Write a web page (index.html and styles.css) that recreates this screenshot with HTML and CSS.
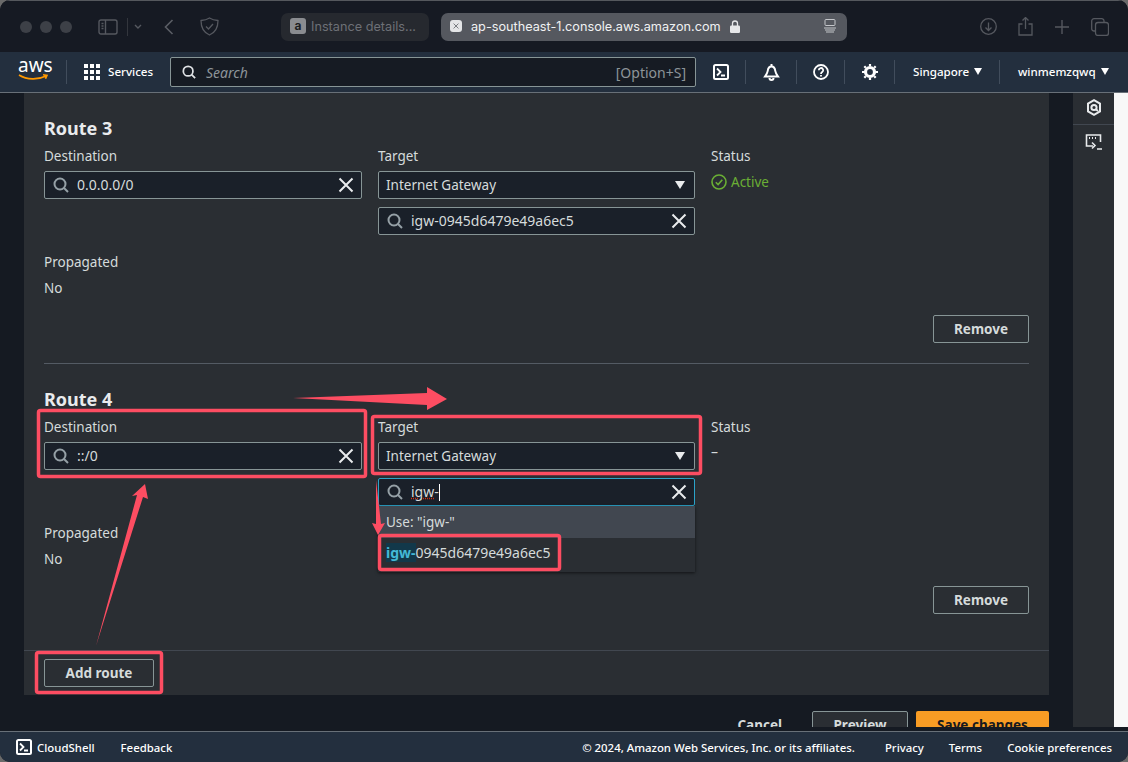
FILE: index.html
```html
<!DOCTYPE html>
<html lang="en">
<head>
    <meta charset="UTF-8">
    <meta name="viewport" content="width=device-width, initial-scale=1">
    <title>Edit routes</title>
    <link rel="stylesheet" href="styles.css">
</head>
<body>

<svg class="defs" width="0" height="0">
    <symbol id="i-search" viewBox="0 0 16 16"><circle cx="7" cy="7" r="5.5" fill="none" stroke="currentColor" stroke-width="2"/><path d="M11 11l4 4" fill="none" stroke="currentColor" stroke-width="2"/></symbol>
    <symbol id="i-close" viewBox="0 0 16 16"><path d="M1.500 1.500l13 13M14.500 1.500l-13 13" fill="none" stroke="currentColor" stroke-width="2"/></symbol>
    <symbol id="i-shell" viewBox="0 0 16 16"><rect x="1" y="1" width="14" height="14" rx="1.5" fill="none" stroke="currentColor" stroke-width="2"/><path d="M4 4.5L7.5 8 4 11.5M8 11.5h4" fill="none" stroke="currentColor" stroke-width="1.8"/></symbol>
</svg>

<div class="window">

    <!-- browser bar -->
    <div class="chrome">
        <span class="dot"></span><span class="dot"></span><span class="dot"></span>
        <svg class="c-sidebar" width="20" height="16" viewBox="0 0 20 16" fill="none" stroke="#55585f" stroke-width="1.4"><rect x="1" y="1" width="18" height="14" rx="2"/><path d="M7.5 1v14M3.5 4.5h2M3.5 7h2M3.5 9.5h2"/></svg>
        <span class="c-sep"></span>
        <svg class="c-down" width="8" height="6" viewBox="0 0 8 6" fill="none" stroke="#55585f" stroke-width="1.4"><path d="M1 1l3 3 3-3"/></svg>
        <svg class="c-back" width="10" height="16" viewBox="0 0 10 16" fill="none" stroke="#5b5e65" stroke-width="1.6"><path d="M8.5 1L1.5 8l7 7"/></svg>
        <svg class="c-shield" width="19" height="19" viewBox="0 0 19 19" fill="none" stroke="#55585f" stroke-width="1.3"><path d="M9.500 1c2.500 1.600 5 2.300 8.500 2.500 0 7-2.500 12-8.500 14.500C3.500 15.500 1 10.500 1 3.500 4.500 3.300 7 2.600 9.500 1z"/><path d="M6 9.500l2.500 2.500 4.500-5"/></svg>
        <div class="tab tab-off">
            <span class="fav fav-a">a</span>
            <span>Instance details...</span>
        </div>
        <div class="tab tab-on">
            <span class="fav fav-x">
                <svg width="6" height="6"><use href="#i-close"/></svg>
            </span>
            <span>ap-southeast-1.console.aws.amazon.com</span>
            <svg class="lock" width="10" height="13" viewBox="0 0 10 13"><path d="M2.500 6V3.500a2.500 2.500 0 0 1 5 0V6" fill="none" stroke="#e6e7e9" stroke-width="1.300"/><rect y="5.500" width="10" height="7.500" rx="1.200" fill="#e6e7e9"/></svg>
            <svg class="reader" width="12" height="14" viewBox="0 0 12 14" fill="none" stroke="#c4c6ca" stroke-width="1"><rect x="1" y=".5" width="10" height="6" rx="1"/><path d="M0 9h12M1 11h10M2 13h8"/></svg>
        </div>
        <svg class="c-dl" width="17" height="17" viewBox="0 0 17 17" fill="none" stroke="#55585f" stroke-width="1.300"><circle cx="8.500" cy="8.500" r="7.800"/><path d="M8.500 4.500v8M5.500 9.500l3 3 3-3"/></svg>
        <svg class="c-share" width="15" height="19" viewBox="0 0 15 19" fill="none" stroke="#55585f" stroke-width="1.300"><path d="M4.500 7H1v11h13V7h-3.500M7.500 12V1M4.500 3.500l3-3 3 3"/></svg>
        <svg class="c-plus" width="14" height="14" viewBox="0 0 14 14" fill="none" stroke="#55585f" stroke-width="1.400"><path d="M7 0v14M0 7h14"/></svg>
        <svg class="c-tabs" width="18" height="18" viewBox="0 0 18 18" fill="none" stroke="#55585f" stroke-width="1.300"><rect x="4.500" y="4.500" width="13" height="13" rx="2.500"/><path d="M4 13H3a2.300 2.300 0 0 1-2.300-2.300V3A2.300 2.300 0 0 1 3 .7h7.500A2.300 2.300 0 0 1 13 3v1"/></svg>
    </div>

    <!-- console nav -->
    <nav class="topnav">
        <div class="aws-logo">
            <span>aws</span>
            <svg width="31" height="7" viewBox="0 0 31 7" fill="none" stroke="#ff9900" stroke-width="1.600"><path d="M1 1c8 5 19 5 27 1M25 .8l4 .5-1.500 3.500"/></svg>
        </div>
        <span class="nav-sep"></span>
        <span class="grid-icon">
            <i></i><i></i><i></i><i></i><i></i><i></i><i></i><i></i><i></i>
        </span>
        <span class="nav-label services">Services</span>
        <div class="nav-search">
            <svg width="14" height="14"><use href="#i-search"/></svg>
            <span class="ph">Search</span>
            <span class="hint">[Option+S]</span>
        </div>
        <span class="nav-btn w50"><svg width="16" height="16"><use href="#i-shell"/></svg></span>
        <span class="nav-btn w51">
            <svg width="17" height="17" viewBox="0 0 17 17" fill="none" stroke="#fff" stroke-width="2"><path d="M8.500 2.500c2.500 0 3.500 2 3.800 4.500.2 1.800 1 3 2.700 5.500H2c1.700-2.500 2.500-3.700 2.700-5.500.3-2.500 1.300-4.500 3.800-4.500z"/><path d="M8.500 0v2"/><path d="M6.500 14a2 2 0 0 0 4 0"/></svg>
        </span>
        <span class="nav-btn w48">
            <svg width="16" height="16" viewBox="0 0 16 16" fill="none" stroke="#fff" stroke-width="1.800"><circle cx="8" cy="8" r="7"/><path d="M5.800 6.200a2.200 2.200 0 1 1 3.300 1.900C8.300 8.600 8 9 8 10M8 11v1.500"/></svg>
        </span>
        <span class="nav-btn w50">
            <svg width="16" height="16" viewBox="0 0 16 16" fill="none" stroke="#fff" stroke-width="2.200"><circle cx="8" cy="8" r="4.500" stroke-width="3.200"/><path d="M8 0v2M8 14v2M0 8h2M14 8h2M2.300 2.300l1.500 1.500M12.200 12.200l1.500 1.500M13.700 2.300l-1.500 1.500M3.800 12.200l-1.500 1.500"/></svg>
        </span>
        <span class="nav-menu region">Singapore <i class="tri"></i></span>
        <span class="nav-menu">winmemzqwq <i class="tri"></i></span>
    </nav>

    <div class="page">
        <div class="content">
            <div class="panel">

                <section class="route">
                    <h2>Route 3</h2>
                    <div class="route-grid">
                        <div>
                            <label>Destination</label>
                            <div class="field">
                                <svg class="f-search" width="16" height="16"><use href="#i-search"/></svg>
                                <span class="f-text">0.0.0.0/0</span>
                                <svg class="f-close" width="16" height="16"><use href="#i-close"/></svg>
                            </div>
                        </div>
                        <div>
                            <label>Target</label>
                            <div class="field select">
                                <span class="f-text">Internet Gateway</span>
                                <i class="select-tri"></i>
                            </div>
                            <div class="field second">
                                <svg class="f-search" width="16" height="16"><use href="#i-search"/></svg>
                                <span class="f-text">igw-0945d6479e49a6ec5</span>
                                <svg class="f-close" width="16" height="16"><use href="#i-close"/></svg>
                            </div>
                        </div>
                        <div>
                            <label>Status</label>
                            <div class="status-ok">
                                <svg width="16" height="16" viewBox="0 0 16 16" fill="none" stroke="#6aaf35" stroke-width="1.600"><circle cx="8" cy="8" r="7"/><path d="M4.800 8.200l2.300 2.300 4.200-4.800"/></svg>
                                Active
                            </div>
                        </div>
                    </div>
                    <div class="propagated">
                        <label>Propagated</label>
                        <p>No</p>
                    </div>
                    <div class="route-actions"><button class="btn">Remove</button></div>
                </section>

                <hr class="route-line">

                <section class="route">
                    <h2>Route 4</h2>
                    <div class="route-grid">
                        <div>
                            <label>Destination</label>
                            <div class="field">
                                <svg class="f-search" width="16" height="16"><use href="#i-search"/></svg>
                                <span class="f-text">::/0</span>
                                <svg class="f-close" width="16" height="16"><use href="#i-close"/></svg>
                            </div>
                        </div>
                        <div>
                            <label>Target</label>
                            <div class="field select">
                                <span class="f-text">Internet Gateway</span>
                                <i class="select-tri"></i>
                            </div>
                            <div class="combo">
                                <div class="field second focused">
                                    <svg class="f-search" width="16" height="16"><use href="#i-search"/></svg>
                                    <span class="f-text"><span class="typo">igw</span>-<span class="caret"></span></span>
                                    <svg class="f-close" width="16" height="16"><use href="#i-close"/></svg>
                                </div>
                                <div class="dropdown">
                                    <div class="opt opt-use">Use: "igw-"</div>
                                    <div class="opt"><mark>igw-</mark>0945d6479e49a6ec5</div>
                                </div>
                            </div>
                        </div>
                        <div>
                            <label>Status</label>
                            <div class="status-none">–</div>
                        </div>
                    </div>
                    <div class="propagated">
                        <label>Propagated</label>
                        <p>No</p>
                    </div>
                    <div class="route-actions"><button class="btn">Remove</button></div>
                </section>

                <div class="panel-foot"><button class="btn">Add route</button></div>
            </div>

            <div class="form-actions">
                <span class="cancel">Cancel</span>
                <button class="btn preview">Preview</button>
                <button class="btn save">Save changes</button>
            </div>
        </div>

        <aside class="rail">
            <div class="rail-item">
                <svg width="16" height="17" viewBox="0 0 16 17" fill="none" stroke="#e8eaec" stroke-width="2"><path d="M8 1.200l6 3.400v7.800l-6 3.400-6-3.400V4.600z"/><circle cx="8" cy="8.500" r="2.600"/><path d="M9.500 10l2.500 2"/></svg>
            </div>
            <div class="rail-item">
                <svg width="18" height="17" viewBox="0 0 18 17" fill="none" stroke="#e8eaec" stroke-width="1.600"><path d="M8 12H1.500V1h14v7"/><path d="M4 4h1M7 4h1M10 4h1" stroke-width="2"/><path d="M7 8.500l3 3-3 3M12 15h5"/></svg>
            </div>
        </aside>
        <div class="scroll-strip"></div>
    </div>

    <footer class="bottombar">
        <svg class="foot-shell" width="16" height="16"><use href="#i-shell"/></svg>
        <span class="foot-shell-text">CloudShell</span>
        <span class="foot-feedback">Feedback</span>
        <span class="foot-copy">© 2024, Amazon Web Services, Inc. or its affiliates.</span>
        <span class="foot-link privacy">Privacy</span>
        <span class="foot-link terms">Terms</span>
        <span class="foot-link cookie">Cookie preferences</span>
    </footer>
</div>

<!-- red annotations drawn on top of the screenshot -->
<svg class="marks" width="1128" height="762" viewBox="0 0 1128 762">
    <g fill="none" stroke="#fd4d62" stroke-width="3.500">
        <rect x="38.500" y="410.500" width="327" height="66" rx="2"/>
        <rect x="372.500" y="416.500" width="328" height="57" rx="2"/>
        <rect x="379.500" y="535.500" width="180" height="34" rx="2"/>
        <rect x="36.500" y="652.500" width="125" height="40" rx="2"/>
    </g>
    <g fill="#fd4d62">
        <polygon points="293,398 427,393 427,387 447,399 427,410 427,405"/>
        <polygon points="96,646 137,495 132,496 145,484 148,499 143,497"/>
        <polygon points="376,480 381,524 385,523 378,535 372,523 376,524"/>
    </g>
</svg>

</body>
</html>
```

FILE: styles.css
```css
* {
    box-sizing: border-box;
}
html {
    background: #6a6a6a;
}
body {
    margin: 0;
    width: 1128px;
    height: 762px;
    overflow: hidden;
    position: relative;
    font-family: "Noto Sans", "Open Sans", sans-serif;
    font-size: 14px;
    color: #d5dbdb;
}
.defs {
    position: absolute;
}
.window {
    height: 762px;
    display: flex;
    flex-direction: column;
    background: #151a22;
    border-radius: 10px;
    overflow: hidden;
}

/* browser bar */
.chrome {
    height: 52px;
    flex: none;
    display: flex;
    align-items: center;
    padding-left: 20px;
    background: #161a23;
    border-top: 1px solid #55585d;
}
.dot {
    width: 12px;
    height: 12px;
    border-radius: 50%;
    background: #3d4047;
    margin-right: 8px;
}
.c-sidebar {
    margin-left: 18px;
}
.c-sep {
    width: 1px;
    height: 18px;
    background: #33363d;
    margin-left: 9px;
}
.c-down {
    margin-left: 6px;
}
.c-back {
    margin-left: 22px;
}
.c-shield {
    margin-left: 26px;
}
.tab {
    height: 28px;
    border-radius: 7px;
    display: flex;
    align-items: center;
    padding-bottom: 1px;
    font-family: Inter, Roboto, sans-serif;
    font-size: 12.7px;
}
.tab-off {
    width: 148px;
    margin-left: 62px;
    padding-left: 9px;
    background: #26292f;
    color: #6d7076;
}
.tab-on {
    width: 406px;
    margin-left: 12px;
    padding-left: 9px;
    background: #55585f;
    color: #f0f1f2;
}
.fav {
    width: 16px;
    height: 16px;
    border-radius: 3px;
    display: flex;
    align-items: center;
    justify-content: center;
    margin-right: 5px;
    flex: none;
}
.fav-a {
    background: #8a8c90;
    color: #1c1e22;
    font-weight: 700;
    font-size: 12px;
    line-height: 1;
}
.fav-x {
    width: 12px;
    height: 12px;
    margin-right: 9px;
    background: #e4e5e7;
    color: #55585f;
}
.lock {
    margin-left: 9px;
}
.reader {
    margin-left: 84px;
}
.c-dl {
    margin-left: 133px;
}
.c-share {
    margin-left: 21px;
}
.c-plus {
    margin-left: 22px;
}
.c-tabs {
    margin-left: 22px;
}

/* console nav */
.topnav {
    height: 41px;
    flex: none;
    display: flex;
    align-items: center;
    padding-left: 18px;
    background: #232f3e;
    border-bottom: 1px solid #687078;
    color: #fff;
    font-size: 11.6px;
}
.aws-logo {
    width: 31px;
    height: 28px;
    position: relative;
    line-height: 20px;
    font-size: 19px;
    text-align: center;
}
.aws-logo span {
    display: block;
    margin-top: -3px;
}
.aws-logo svg {
    display: block;
    margin-top: -1px;
}
.nav-sep {
    width: 1px;
    height: 24px;
    background: #414d5c;
    margin-left: 17px;
}
.grid-icon {
    width: 16px;
    height: 16px;
    margin-left: 17px;
    display: grid;
    grid-template-columns: repeat(3, 4px);
    grid-auto-rows: 4px;
    gap: 2px;
}
.grid-icon i {
    background: #fff;
}
.services {
    margin-left: 8px;
    width: 62px;
    padding-bottom: 2px;
    font-weight: 500;
}
.nav-search {
    width: 526px;
    height: 30px;
    display: flex;
    align-items: center;
    padding: 0 9px 0 11px;
    background: #161b23;
    border: 1px solid #879596;
    border-radius: 2px;
    font-size: 14px;
    color: #dfe2e5;
}
.ph {
    margin-left: 10px;
    font-style: italic;
    color: #8d9499;
}
.hint {
    margin-left: auto;
    color: #8d9499;
}
.nav-btn {
    height: 24px;
    display: flex;
    align-items: center;
    justify-content: center;
    border-right: 1px solid #414d5c;
}
.w50 {
    width: 50px;
}
.w51 {
    width: 51px;
}
.w48 {
    width: 48px;
}
.nav-menu {
    height: 24px;
    display: flex;
    align-items: center;
    padding: 0 0 2px 18px;
    font-weight: 500;
}
.region {
    width: 105px;
    border-right: 1px solid #414d5c;
}
.tri {
    width: 0;
    height: 0;
    margin-left: 5px;
    border-left: 4.500px solid transparent;
    border-right: 4.500px solid transparent;
    border-top: 7px solid #fff;
}

/* page */
.page {
    height: 634px;
    flex: none;
    display: flex;
    overflow: hidden;
}
.content {
    width: 1025px;
    margin-left: 24px;
    flex: none;
}
.panel {
    width: 1025px;
    background: #2a2e33;
}
.route {
    padding: 24px 20px 0;
}
.route h2 {
    margin: 0 0 7px;
    font-size: 18px;
    line-height: 22px;
    font-weight: 700;
    color: #e9ebed;
}
label {
    display: block;
    font-size: 13.5px;
    line-height: 20px;
    margin-bottom: 5px;
}
.route-grid {
    display: grid;
    grid-template-columns: 318px 317px 318px;
    gap: 16px;
}
.field {
    height: 28px;
    display: flex;
    align-items: center;
    padding: 0 7px 1px 8px;
    background: #1a2029;
    border: 1px solid #879596;
    border-radius: 2px;
    color: #d5dbdb;
}
.second {
    margin-top: 8px;
}
.f-search {
    color: #95a0a6;
    flex: none;
    margin-top: 1px;
}
.f-text {
    margin-left: 8px;
    flex: 1;
}
.f-close {
    color: #e9ebed;
    flex: none;
    margin-top: 1px;
}
.select {
    padding-left: 7px;
}
.select .f-text {
    margin-left: 0;
    font-size: 13.5px;
}
.select-tri {
    width: 0;
    height: 0;
    margin: 1px 2px 0 0;
    border-left: 5.500px solid transparent;
    border-right: 5.500px solid transparent;
    border-top: 8px solid #e9ebed;
}
.status-ok {
    display: flex;
    align-items: center;
    gap: 4px;
    color: #6aaf35;
    font-size: 13.5px;
    line-height: 22px;
}
.status-none {
    margin-top: 4px;
    line-height: 20px;
}
.propagated {
    margin-top: 17px;
}
.propagated label {
    margin-bottom: 6px;
}
.propagated p {
    margin: 0;
    font-size: 13.5px;
    line-height: 20px;
}
.route-actions {
    display: flex;
    justify-content: flex-end;
    margin-top: 17px;
}
.btn {
    height: 28px;
    padding: 0;
    background: #2a2e33;
    border: 1px solid #879596;
    border-radius: 2px;
    color: #d5dbdb;
    font: 700 13.5px "Noto Sans", sans-serif;
}
.route-actions .btn {
    width: 96px;
}
.route-line {
    margin: 20px 20px 0;
    border: 0;
    border-top: 1px solid #545b64;
}
.panel-foot {
    margin-top: 36px;
    padding: 8px 20px;
    border-top: 1px solid #414750;
}
.panel-foot .btn {
    display: block;
    width: 110px;
}

/* target dropdown */
.combo {
    position: relative;
}
.focused {
    border-color: #2ba3c9;
    border-width: 1.500px;
}
.typo {
    text-decoration: underline dotted #d13212;
}
.caret {
    display: inline-block;
    width: 1px;
    height: 17px;
    background: #fff;
    vertical-align: -4px;
}
.dropdown {
    position: absolute;
    top: 100%;
    left: 0;
    right: 0;
    z-index: 2;
    background: #2a2e33;
    box-shadow: 0 1px 3px rgba(0, 0, 0, .6);
}
.opt {
    height: 34px;
    padding-left: 8px;
    line-height: 30px;
}
.opt-use {
    height: 32px;
    font-size: 13.5px;
    line-height: 32px;
    background: #414750;
}
mark {
    background: #12384a;
    color: #44b9d6;
    font-weight: 700;
}

/* buttons under the panel, cut off by the footer */
.form-actions {
    display: flex;
    justify-content: flex-end;
    align-items: flex-start;
    margin-top: 16px;
}
.cancel {
    margin-right: 30px;
    margin-top: 5px;
    font-size: 13.5px;
    font-weight: 700;
}
.preview {
    width: 96px;
    height: 28px;
    margin-right: 8px;
    background: #2a2e33;
}
.save {
    width: 133px;
    height: 28px;
    background: #f89c24;
    border: 0;
    color: #16191f;
}

/* right rail */
.rail {
    width: 41px;
    margin-left: 24px;
    flex: none;
    background: #2a2e33;
}
.rail-item {
    height: 32px;
    padding-top: 6px;
    display: flex;
    justify-content: center;
    border-bottom: 1px solid #414750;
}
.rail-item + .rail-item {
    height: 36px;
    padding-top: 9px;
    border: 0;
}
.scroll-strip {
    flex: 1;
    background: #f8f8f8;
}

/* console footer */
.bottombar {
    height: 31px;
    margin-top: 4px;
    flex: none;
    display: flex;
    align-items: center;
    background: #232f3e;
    border-top: 1px solid #687078;
    color: #fff;
    font-size: 11.4px;
    font-weight: 500;
}
.foot-shell {
    margin-left: 16px;
}
.foot-shell-text {
    margin-left: 5px;
}
.foot-feedback {
    margin-left: 26px;
}
.foot-copy {
    margin-left: auto;
}
.foot-link {
    margin-left: 30px;
}
.cookie {
    margin-left: 25px;
    margin-right: 16px;
}
.terms {
    margin-left: 25px;
}

.marks {
    position: absolute;
    top: 0;
    left: 0;
    z-index: 5;
    pointer-events: none;
}
```
